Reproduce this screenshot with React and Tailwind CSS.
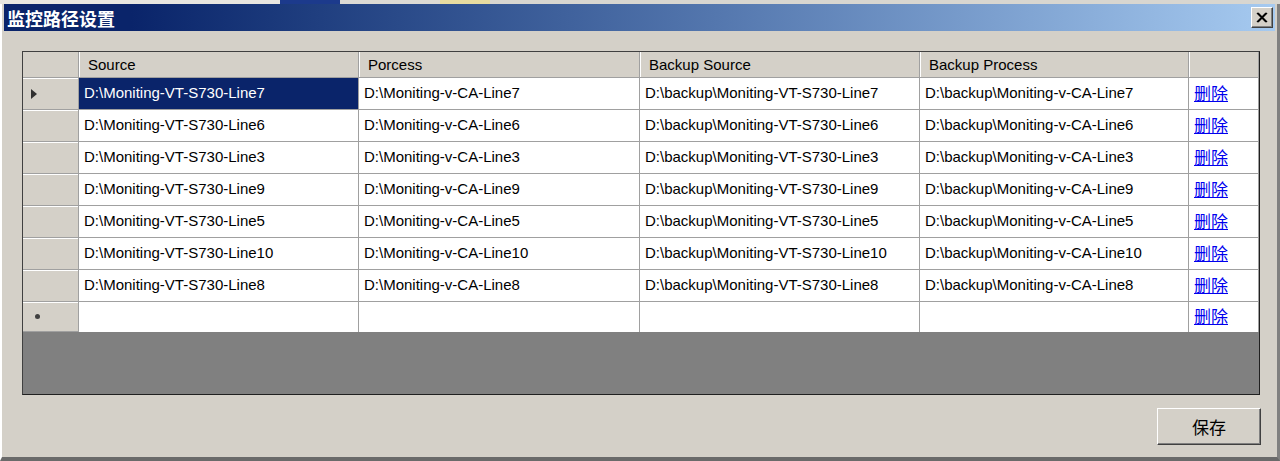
import React from "react";

const rows = ["7", "6", "3", "9", "5", "10", "8"];

function Cell({ w, children, selected }) {
  return (
    <div
      className={`${w} h-full shrink-0 flex items-center pl-[5px] border-b border-r border-[#a0a0a0] ${
        selected ? "bg-[#0a246a] text-white" : "bg-white text-black"
      } whitespace-nowrap overflow-hidden`}
    >
      {children}
    </div>
  );
}

function HeadCell({ w, children }) {
  return (
    <div className={`${w} h-full shrink-0 flex items-center pl-[9px] pt-[2px] bg-[#d4d0c8] border-r border-[#a0a0a0] shadow-[inset_1px_0_0_#ffffff] border-b`}>
      {children}
    </div>
  );
}

function RowHead({ children }) {
  return (
    <div className="w-[56px] h-full shrink-0 flex items-center pl-[8px] bg-[#d4d0c8] border-r border-b border-[#a0a0a0] shadow-[inset_0_1px_0_#ffffff]">
      {children}
    </div>
  );
}

function DelLink() {
  return (
    <span className="text-[#0000ee] underline text-[17px] leading-none mb-[3px]" style={{ fontFamily: '"Noto Sans CJK SC", sans-serif' }}>
      删除
    </span>
  );
}

export default function App() {
  return (
    <div
      className="w-[1280px] h-[461px] bg-[#d4d0c8] flex flex-col overflow-hidden text-[15px]"
      style={{ fontFamily: '"Liberation Sans", "Noto Sans CJK SC", sans-serif' }}
    >
      {/* strip from other windows */}
      <div className="h-[4px] w-full flex bg-[#d4d0c8]">
        <div className="w-[280px] bg-[#e8e6e0]" />
        <div className="w-[60px] bg-[#1c3a8c]" />
        <div className="w-[100px] bg-[#dcdad4]" />
        <div className="w-[50px] bg-[#e8dca0]" />
        <div className="flex-1 bg-[#d8d6d0]" />
      </div>
      <div className="flex-1 flex flex-col border-l-2 border-l-[#ffffff] border-r-[3px] border-r-[#808080] border-b-[4px] border-b-[#6a6a6a]">
        {/* title bar */}
        <div className="h-[27px] mx-[2px] flex items-center justify-between bg-gradient-to-r from-[#0a246a] from-10% to-[#a6caf0] pl-[3px] pr-[2px]">
          <span
            className="text-white font-bold text-[18px] leading-none"
            style={{ fontFamily: '"Noto Sans CJK SC", sans-serif' }}
          >
            监控路径设置
          </span>
          <div className="w-[22px] h-[21px] bg-[#d4d0c8] border border-t-white border-l-white border-r-[#404040] border-b-[#404040] shadow-[inset_-1px_-1px_0_#808080] flex items-center justify-center">
            <svg width="12" height="11" viewBox="0 0 12 11">
              <path d="M1 1 L10 10 M2 1 L11 10 M10 1 L1 10 M11 1 L2 10" stroke="#000" strokeWidth="1.4" />
            </svg>
          </div>
        </div>

        {/* body */}
        <div className="flex-1 flex flex-col pl-[20px] pr-[16px] pt-[20px]">
          <div className="w-[1238px] h-[344px] border border-t-[#404040] border-l-[#404040] border-r-[#202020] border-b-[#202020] bg-[#808080] flex flex-col">
            <div className="h-[26px] flex text-black">
              <div className="w-[56px] h-full shrink-0 bg-[#d4d0c8] border-r border-b border-[#a0a0a0]" />
              <HeadCell w="w-[280px]">Source</HeadCell>
              <HeadCell w="w-[281px]">Porcess</HeadCell>
              <HeadCell w="w-[280px]">Backup Source</HeadCell>
              <HeadCell w="w-[269px]">Backup Process</HeadCell>
              <HeadCell w="w-[70px]"></HeadCell>
            </div>
            {rows.map((n, i) => (
              <div key={n} className="h-[32px] flex">
                <RowHead>
                  {i === 0 && (
                    <svg width="6" height="10" viewBox="0 0 6 10">
                      <path d="M0 0 L6 5 L0 10 Z" fill="#303030" />
                    </svg>
                  )}
                </RowHead>
                <Cell w="w-[280px]" selected={i === 0}>{`D:\\Moniting-VT-S730-Line${n}`}</Cell>
                <Cell w="w-[281px]">{`D:\\Moniting-v-CA-Line${n}`}</Cell>
                <Cell w="w-[280px]">{`D:\\backup\\Moniting-VT-S730-Line${n}`}</Cell>
                <Cell w="w-[269px]">{`D:\\backup\\Moniting-v-CA-Line${n}`}</Cell>
                <Cell w="w-[70px]"><DelLink /></Cell>
              </div>
            ))}
            <div className="h-[30px] flex">
              <RowHead>
                <span className="ml-[4px] w-[5px] h-[5px] rounded-full bg-[#404040] inline-block" />
              </RowHead>
              <div className="w-[280px] h-full shrink-0 bg-white border-r border-[#a0a0a0]" />
              <div className="w-[281px] h-full shrink-0 bg-white border-r border-[#a0a0a0]" />
              <div className="w-[280px] h-full shrink-0 bg-white border-r border-[#a0a0a0]" />
              <div className="w-[269px] h-full shrink-0 bg-white border-r border-[#a0a0a0]" />
              <div className="w-[70px] h-full shrink-0 bg-white flex items-center pl-[5px] border-r border-[#a0a0a0]">
                <DelLink />
              </div>
            </div>
          </div>
          <div className="flex justify-end mt-[13px]">
            <button
              className="w-[104px] h-[37px] bg-[#d4d0c8] border border-t-white border-l-white border-r-[#404040] border-b-[#404040] shadow-[inset_-1px_-1px_0_#808080] text-[17px] text-black"
              style={{ fontFamily: '"Noto Sans CJK SC", sans-serif' }}
            >
              保存
            </button>
          </div>
        </div>
      </div>
    </div>
  );
}
